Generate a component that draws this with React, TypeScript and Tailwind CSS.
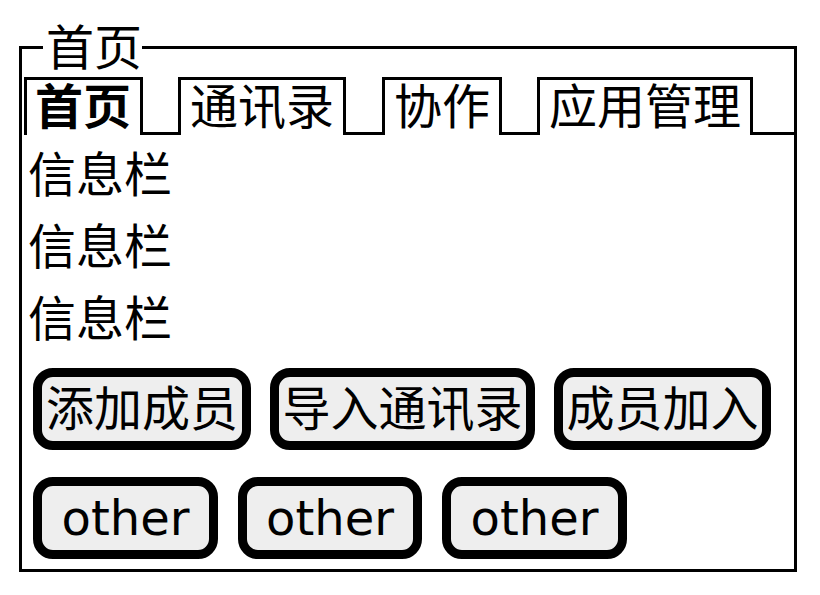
import React from 'react';

const tabs = [
  { label: '首页', active: true, cls: 'pl-[8px] pr-[9px] font-bold', gap: 'w-[35px]' },
  { label: '通讯录', active: false, cls: 'px-[9px]', gap: 'w-[36px]' },
  { label: '协作', active: false, cls: 'px-[9px]', gap: 'w-[35px]' },
  { label: '应用管理', active: false, cls: 'px-[9px]', gap: '' },
];

const buttonRows = [
  {
    gap: 'gap-[19px]',
    items: [
      { label: '添加成员', w: 'w-[218px]' },
      { label: '导入通讯录', w: 'w-[265px]' },
      { label: '成员加入', w: 'w-[217px]' },
    ],
  },
  {
    gap: 'gap-[20px]',
    items: [
      { label: 'other', w: 'w-[185px]' },
      { label: 'other', w: 'w-[184px]' },
      { label: 'other', w: 'w-[185px]' },
    ],
  },
];

const Button: React.FC<{ label: string; w: string }> = ({ label, w }) => (
  <div
    className={`${w} h-[82px] border-[9px] border-black rounded-[20px] bg-[#eeeeee] flex items-center justify-center text-[48px] leading-[64px] text-black whitespace-nowrap`}
  >
    {label}
  </div>
);

export default function App() {
  return (
    <div className="w-[820px] h-[595px] bg-white pt-[46px] pl-[19px] font-['DejaVu_Sans','Noto_Sans_CJK_SC',sans-serif] text-black">
      <div className="relative w-[778px] h-[526px] border-[3px] border-black pt-[28px] pl-[2px]">
        {/* group title sits on the top border */}
        <div className="absolute left-[21px] top-[-25px] bg-white pl-[3px] text-[48px] leading-[48px]">
          首页
        </div>

        {/* tab strip */}
        <div className="flex h-[58px]">
          {tabs.map((t) => (
            <React.Fragment key={t.label}>
              <div
                className={`border-t-[3px] border-x-[3px] border-black text-[48px] leading-[55px] whitespace-nowrap ${t.cls}`}
              >
                {t.label}
              </div>
              <div className={`${t.gap || 'flex-1'} border-b-[3px] border-black`} />
            </React.Fragment>
          ))}
        </div>

        {/* info lines */}
        <div className="mt-[4px] pl-[4px] flex flex-col text-[48px] leading-[72px]">
          <div>信息栏</div>
          <div>信息栏</div>
          <div>信息栏</div>
        </div>

        {/* buttons */}
        <div className="mt-[13px] ml-[9px] flex flex-col gap-[27px]">
          {buttonRows.map((row, i) => (
            <div key={i} className={`flex ${row.gap}`}>
              {row.items.map((b, j) => (
                <Button key={j} label={b.label} w={b.w} />
              ))}
            </div>
          ))}
        </div>
      </div>
    </div>
  );
}
